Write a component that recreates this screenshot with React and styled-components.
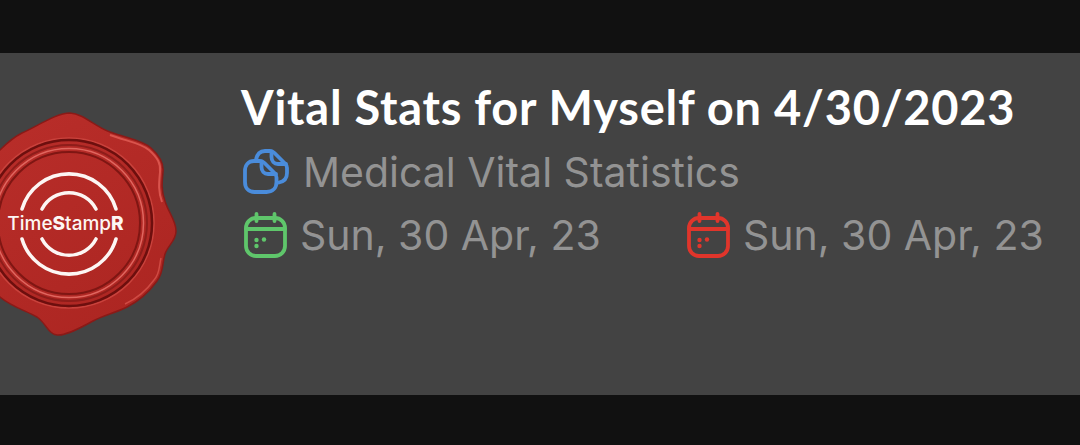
import React from 'react';
import styled, { createGlobalStyle } from 'styled-components';

const GlobalStyle = createGlobalStyle`
  html, body {
    margin: 0;
    padding: 0;
    background: #111111;
    overflow: hidden;
  }
`;

const Page = styled.div`
  width: 1080px;
  height: 445px;
  padding-top: 53px;
  box-sizing: border-box;
  background: #111111;
  overflow: hidden;
`;

const Card = styled.div`
  height: 342px;
  background: #434343;
  display: flex;
  align-items: flex-start;
`;

const SealBox = styled.svg`
  width: 192px;
  height: 240px;
  margin: 52px 0 0 -12px;
  flex: none;
`;

const Details = styled.div`
  margin-left: 61px;
  padding-top: 27px;
  display: flex;
  flex-direction: column;
`;

const Title = styled.h1`
  margin: 0 0 14px;
  font-family: 'Lato', sans-serif;
  font-size: 47px;
  line-height: 55px;
  font-weight: 700;
  letter-spacing: 0.75px;
  color: #ffffff;
  white-space: nowrap;
`;

const MetaRow = styled.div`
  display: flex;
  align-items: center;
  height: 46px;
  margin-bottom: 17px;
`;

const DateItem = styled.div`
  display: flex;
  align-items: center;
  width: ${(p) => p.$width}px;
`;

const MetaText = styled.span`
  font-family: 'Inter', sans-serif;
  font-size: 41px;
  font-weight: 400;
  color: #939393;
  white-space: nowrap;
  margin-left: 13px;
`;

const IconSvg = styled.svg`
  width: ${(p) => p.$w}px;
  height: 46px;
  flex: none;
  fill: none;
  margin-left: ${(p) => p.$inset || 0}px;
  stroke: ${(p) => p.$color};
  stroke-width: 3.8;
  stroke-linecap: round;
  stroke-linejoin: round;
`;

const Seal = () => (
  <SealBox viewBox="-12 105 192 240">
    <defs>
      <linearGradient id="wax" x1="0" y1="0" x2="0.6" y2="1">
        <stop offset="0" stopColor="#b92e2a" />
        <stop offset="1" stopColor="#ad2622" />
      </linearGradient>
    </defs>
    <path
      d="M70 113 C84 114 94 126 110 132 C126 138 142 140 151 148 C160 156 164 163 163 172 C162 182 161 190 165 201 C168 212 176 220 176 231 C176 241 168 245 165 254 C162 263 164 272 157 281 C149 292 139 301 127 307 C115 313 104 315 93 321 C82 327 66 336 57 335 C48 334 46 323 37 317 C27 311 12 307 0 297 C-14 285 -22 170 0 150 C8 142 14 137 22 133 C36 127 56 113 70 113 Z"
      fill="url(#wax)"
      stroke="#8a1a17"
      strokeWidth="1.5"
    />
    <path
      d="M110 135 C126 141 141 143 149 150 C158 158 161 164 160 172 C159 183 158 191 162 202"
      fill="none"
      stroke="#d9544d"
      strokeWidth="2"
    />
    <path
      d="M161 258 C159 266 160 274 154 280 C146 291 136 299 125 304"
      fill="none"
      stroke="#cf4a43"
      strokeWidth="1.5"
    />
    <circle cx="69" cy="223" r="85" fill="none" stroke="#c9423c" strokeWidth="1.5" />
    <circle cx="69" cy="223" r="83" fill="none" stroke="#6d0f0e" strokeWidth="2.5" />
    <circle cx="69" cy="223" r="78" fill="none" stroke="#8e1d1a" strokeWidth="2" />
    <circle cx="69" cy="223" r="74.5" fill="none" stroke="#e0665f" strokeWidth="1.5" />
    <circle cx="69" cy="223" r="71" fill="none" stroke="#7f1613" strokeWidth="2" />
    <g fill="none" stroke="#fdf6f4" strokeWidth="3.6" strokeLinecap="round">
      <path d="M22 209 A49 49 0 0 1 116 209" />
      <path d="M42 209 A30.5 30.5 0 0 1 96 209" />
      <path d="M22 239 A49 49 0 0 0 116 239" />
      <path d="M42 239 A30.5 30.5 0 0 0 96 239" />
    </g>
    <text
      x="65.5"
      y="230"
      textAnchor="middle"
      fontFamily="'Inter', sans-serif"
      fontSize="19"
      fontWeight="500"
      fill="#fdf6f4"
    >
      Time<tspan fontWeight="800">S</tspan>tamp<tspan fontWeight="800">R</tspan>
    </text>
  </SealBox>
);

const CopyIcon = () => (
  <IconSvg $w={47} $inset={2} $color="#4a8cdb" viewBox="0 0 47 46">
    <path d="M13 11 C14 5 17 2 22 2 H27 C29 2 30 2.500 31.500 4 L42 14.500 C43.500 16 44 17 44 19 V24 C44 29 41 32.500 36 33.500" />
    <path d="M28.500 2.500 V8 C28.500 12 31 15 35 15 H43" />
    <path d="M11 12 H17 C19 12 20 12.500 21.500 14 L31.500 24 C33 25.500 33.500 26.500 33.500 28.500 V33 C33.500 39 29.500 43 23.500 43 H11.500 C5.500 43 2 39 2 33 V22 C2 16 5.500 12 11 12 Z" />
    <path d="M18.500 12.500 V18 C18.500 22 21 25 25 25 H33" />
  </IconSvg>
);

const CalendarIcon = ({ color, inset }) => (
  <IconSvg $w={43} $inset={inset} $color={color} viewBox="0 0 43 46">
    <rect x="2" y="6" width="39" height="38" rx="10" />
    <path d="M2 17 H41" />
    <path d="M12.500 2 V9 M30.500 2 V9" />
    <g fill={color} stroke="none">
      <circle cx="12.500" cy="28" r="2.200" />
      <circle cx="20" cy="27.500" r="2.200" />
      <circle cx="12.500" cy="34" r="2.200" />
    </g>
  </IconSvg>
);

const App = () => (
  <Page>
    <GlobalStyle />
    <Card>
      <Seal />
      <Details>
        <Title>Vital Stats for Myself on 4/30/2023</Title>
        <MetaRow>
          <CopyIcon />
          <MetaText>Medical Vital Statistics</MetaText>
        </MetaRow>
        <MetaRow>
          <DateItem $width={446}>
            <CalendarIcon color="#5fc66b" inset={3} />
            <MetaText>Sun, 30 Apr, 23</MetaText>
          </DateItem>
          <DateItem $width={400}>
            <CalendarIcon color="#e0352b" />
            <MetaText>Sun, 30 Apr, 23</MetaText>
          </DateItem>
        </MetaRow>
      </Details>
    </Card>
  </Page>
);

export default App;
